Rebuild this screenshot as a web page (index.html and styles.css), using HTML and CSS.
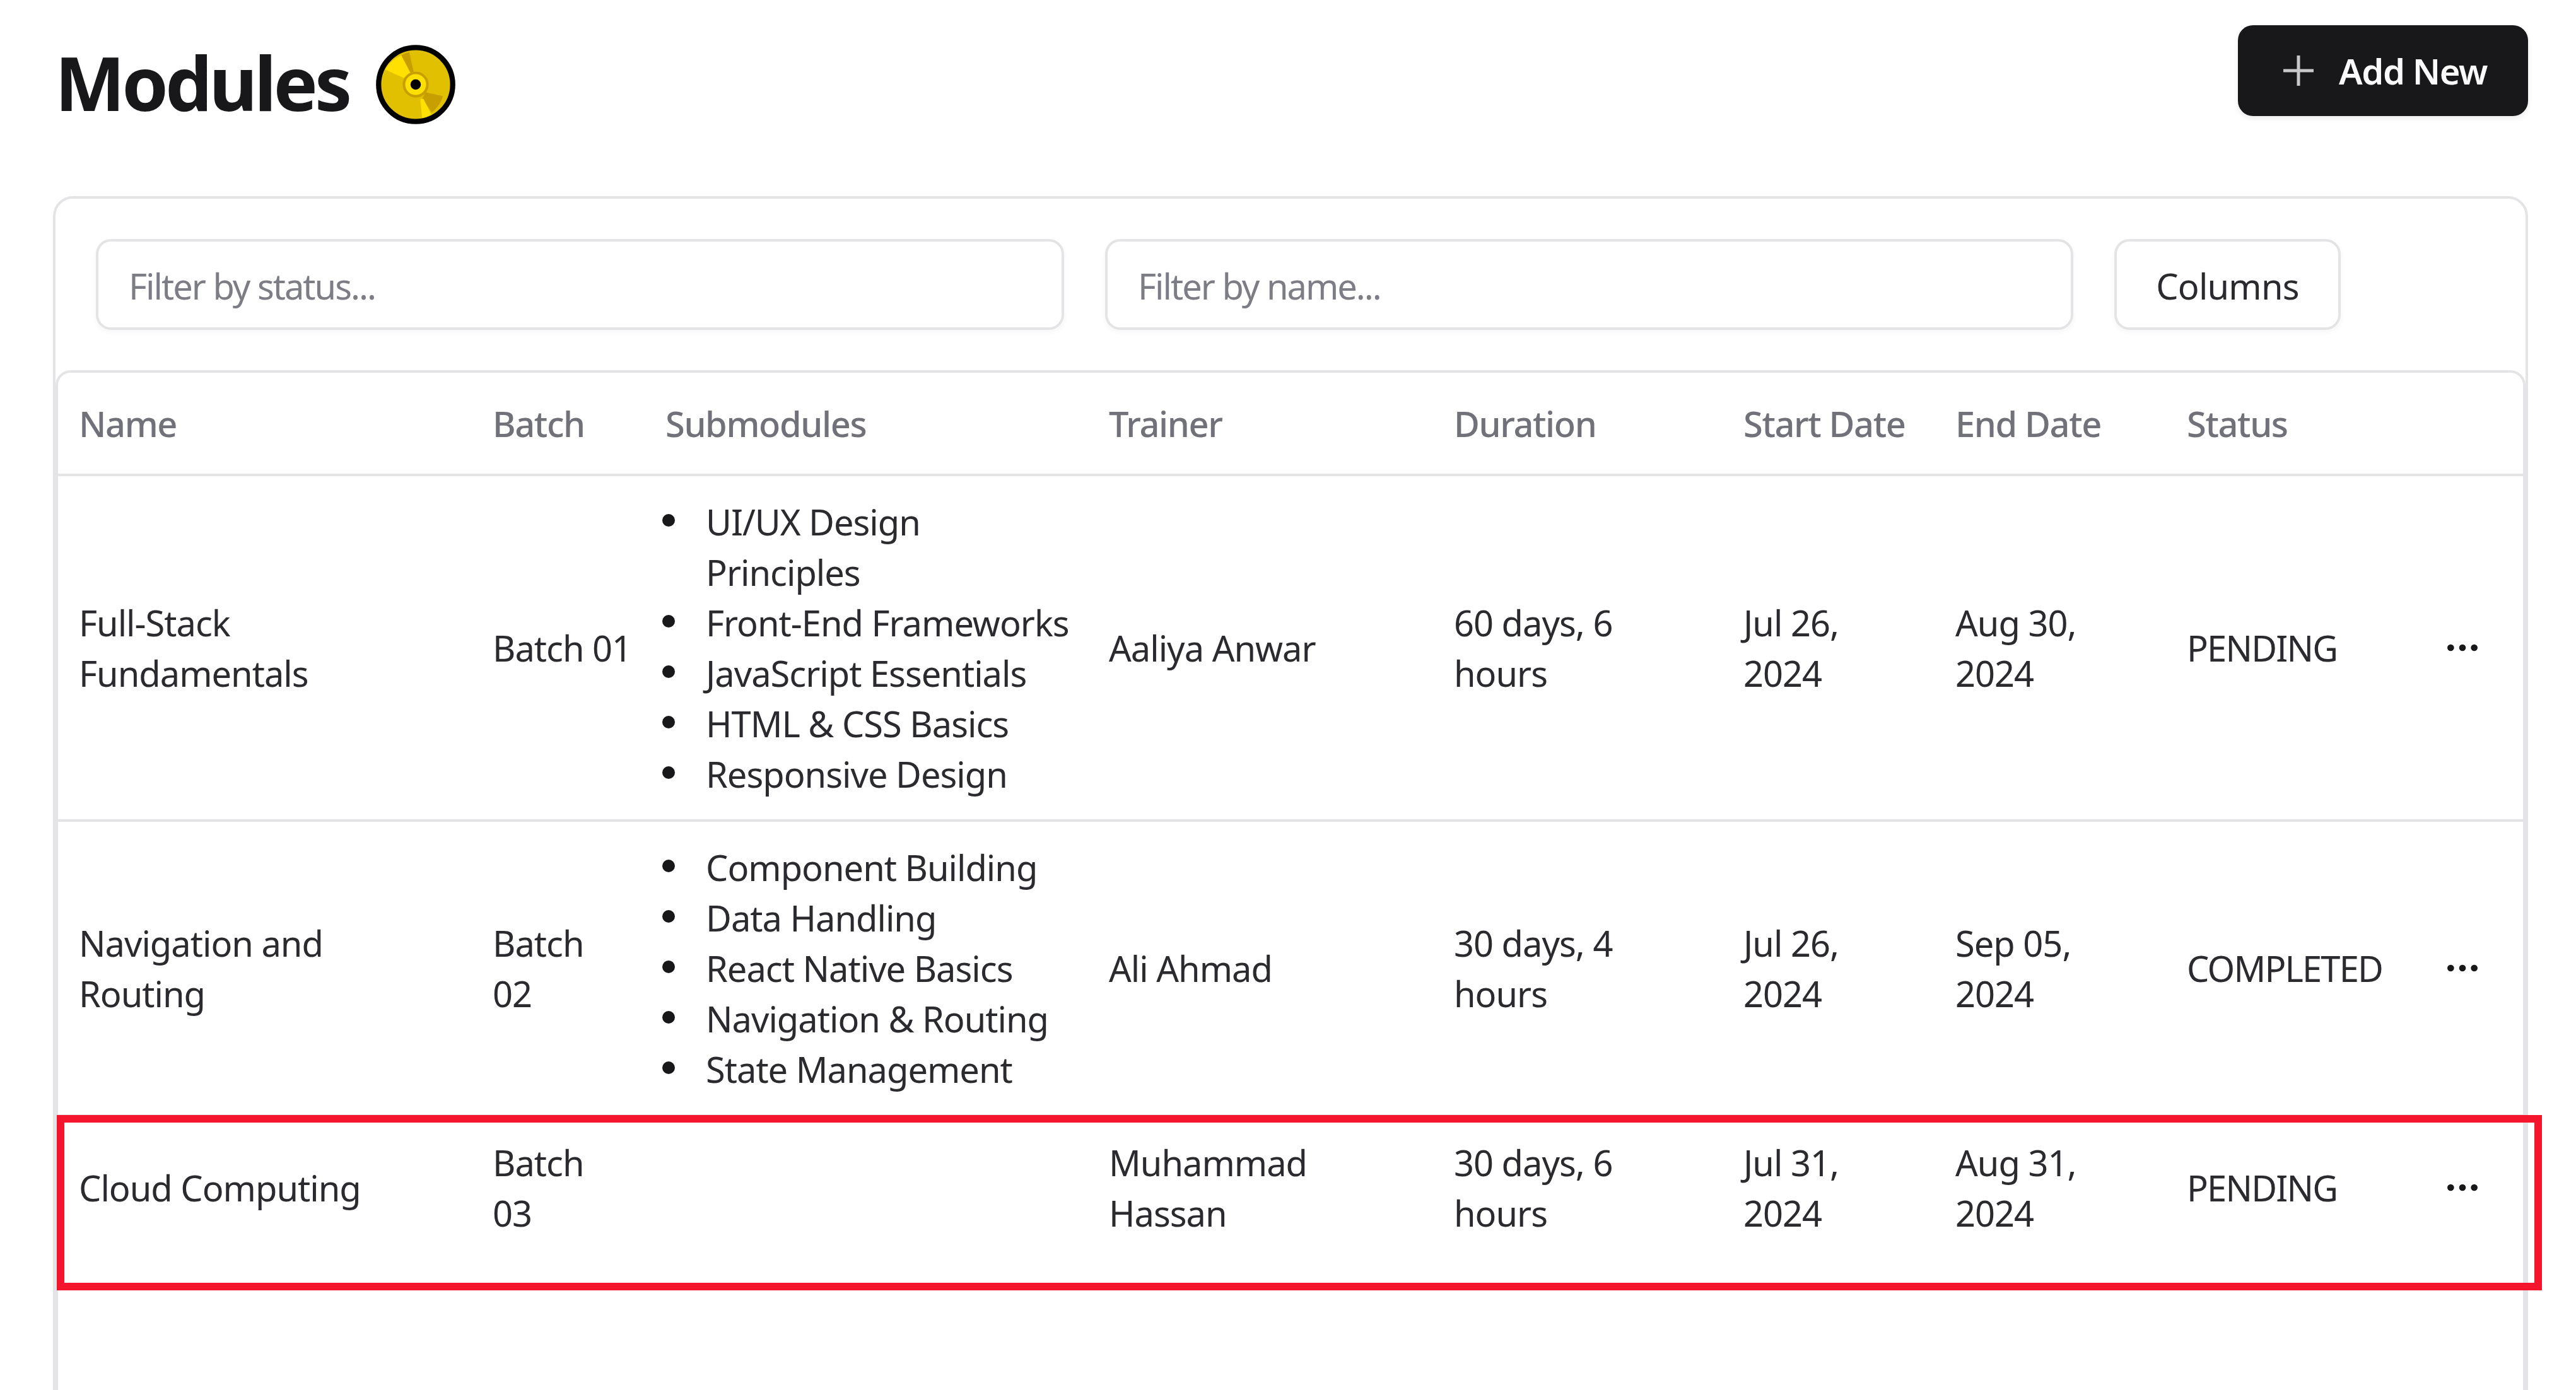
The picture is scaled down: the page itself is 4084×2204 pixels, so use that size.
FILE: index.html
```html
<!DOCTYPE html>
<html lang="en">
<head>
    <meta charset="UTF-8">
    <title>Modules</title>
    <link rel="stylesheet" href="styles.css">
</head>
<body>
    <div class="page">
        <header class="page-head">
            <h1 class="title">Modules
                <svg class="disc" viewBox="-66 -66 132 132">
                    <circle r="56" fill="#e0c000"/>
                    <path d="M-47 -23 A52 52 0 0 1 -22 -45 L-8 -18 L-18 -10 Z" fill="#ffe000"/>
                    <path d="M-22 -45 A52 52 0 0 1 -10 -50 L-3 -20 L-8 -18 Z" fill="#c89f00"/>
                    <path d="M15 12 L42 18 A52 52 0 0 1 25 43 L10 22 Z" fill="#c89f00"/>
                    <path d="M7 22 L12 22 L24 46 A52 52 0 0 1 10 52 Z" fill="#ffe000"/>
                    <circle r="20" fill="#c89f00"/>
                    <circle r="16" fill="#ffe000"/>
                    <circle r="8" fill="#000"/>
                    <circle r="57" fill="none" stroke="#000" stroke-width="8"/>
                </svg>
            </h1>
            <button class="btn-add">
                <svg class="plus" viewBox="0 0 48 48"><path d="M24 0V48M0 24H48"/></svg>
                Add New
            </button>
        </header>

        <section class="card">
            <div class="toolbar">
                <input class="filter" placeholder="Filter by status...">
                <input class="filter" placeholder="Filter by name...">
                <button class="btn-columns">Columns</button>
            </div>

            <div class="table-wrap">
                <table class="modules">
                    <colgroup>
                        <col class="c-name"><col class="c-batch"><col class="c-sub"><col class="c-trainer">
                        <col class="c-duration"><col class="c-start"><col class="c-end"><col class="c-status"><col>
                    </colgroup>
                    <thead>
                        <tr>
                            <th>Name</th><th>Batch</th><th>Submodules</th><th>Trainer</th>
                            <th>Duration</th><th>Start Date</th><th>End Date</th><th>Status</th><th></th>
                        </tr>
                    </thead>
                    <tbody>
                        <tr>
                            <td>Full-Stack Fundamentals</td>
                            <td class="nowrap">Batch 01</td>
                            <td class="sub-cell">
                                <ul class="subs">
                                    <li>UI/UX Design Principles</li>
                                    <li>Front-End Frameworks</li>
                                    <li>JavaScript Essentials</li>
                                    <li>HTML &amp; CSS Basics</li>
                                    <li>Responsive Design</li>
                                </ul>
                            </td>
                            <td>Aaliya Anwar</td>
                            <td>60 days, 6 hours</td>
                            <td>Jul 26, 2024</td>
                            <td>Aug 30, 2024</td>
                            <td class="status">PENDING</td>
                            <td class="actions"><svg class="dots" viewBox="0 0 24 24"><circle cx="5" cy="12" r="2"/><circle cx="12" cy="12" r="2"/><circle cx="19" cy="12" r="2"/></svg></td>
                        </tr>
                        <tr>
                            <td>Navigation and Routing</td>
                            <td>Batch 02</td>
                            <td class="sub-cell">
                                <ul class="subs">
                                    <li>Component Building</li>
                                    <li>Data Handling</li>
                                    <li>React Native Basics</li>
                                    <li>Navigation &amp; Routing</li>
                                    <li>State Management</li>
                                </ul>
                            </td>
                            <td>Ali Ahmad</td>
                            <td>30 days, 4 hours</td>
                            <td>Jul 26, 2024</td>
                            <td>Sep 05, 2024</td>
                            <td class="status">COMPLETED</td>
                            <td class="actions"><svg class="dots" viewBox="0 0 24 24"><circle cx="5" cy="12" r="2"/><circle cx="12" cy="12" r="2"/><circle cx="19" cy="12" r="2"/></svg></td>
                        </tr>
                        <tr>
                            <td>Cloud Computing</td>
                            <td>Batch 03</td>
                            <td></td>
                            <td>Muhammad Hassan</td>
                            <td>30 days, 6 hours</td>
                            <td>Jul 31, 2024</td>
                            <td>Aug 31, 2024</td>
                            <td class="status">PENDING</td>
                            <td class="actions"><svg class="dots" viewBox="0 0 24 24"><circle cx="5" cy="12" r="2"/><circle cx="12" cy="12" r="2"/><circle cx="19" cy="12" r="2"/></svg></td>
                        </tr>
                    </tbody>
                </table>
            </div>
        </section>
    </div>

    <div class="highlight"></div>
</body>
</html>
```

FILE: styles.css
```css
html, body {
    margin: 0;
    height: 100%;
    overflow: hidden;
    background: #fff;
}

body {
    font-family: "Noto Sans", sans-serif;
    font-size: 56px;
    line-height: 80px;
    color: #2b2b2f;
    letter-spacing: -1px;
}

.page {
    box-sizing: border-box;
    height: 100vh;
    overflow: hidden;
    padding: 40px 76px 0 84px;
}

.page-head {
    display: flex;
    justify-content: space-between;
    align-items: flex-start;
    margin-bottom: 100px;
}

.title {
    display: flex;
    align-items: center;
    gap: 38px;
    margin: 11px 0 0 3px;
    font-size: 118px;
    line-height: 160px;
    font-weight: 700;
    letter-spacing: -5px;
    color: #18181b;
}

.disc {
    width: 136px;
    height: 136px;
    margin-top: 6px;
}

.btn-add {
    display: flex;
    align-items: center;
    gap: 40px;
    box-sizing: border-box;
    width: 460px;
    height: 144px;
    padding: 0 0 0 72px;
    border: none;
    border-radius: 24px;
    background: #18181b;
    color: #fafafa;
    font: inherit;
    font-weight: 600;
    letter-spacing: -1.4px;
    box-shadow: 0 4px 8px rgba(0, 0, 0, 0.08);
}

.plus {
    width: 48px;
    height: 48px;
    stroke: #c8c8c8;
    stroke-width: 5;
    fill: none;
}

.card {
    height: 2100px;
    border: 4px solid #e4e4e7;
    border-radius: 32px;
}

.toolbar {
    display: flex;
    gap: 65px;
    padding: 64px 64px;
}

.filter {
    box-sizing: border-box;
    width: 1535px;
    height: 144px;
    padding: 4px 48px 0;
    border: 4px solid #e4e4e7;
    border-radius: 24px;
    font: inherit;
    letter-spacing: -2px;
    color: #18181b;
    box-shadow: 0 4px 8px rgba(0, 0, 0, 0.04);
    outline: none;
}

.filter::placeholder {
    color: #7d7d86;
}

.btn-columns {
    box-sizing: border-box;
    width: 359px;
    height: 144px;
    padding: 4px 0 0;
    border: 4px solid #e4e4e7;
    border-radius: 24px;
    background: #fff;
    color: #2b2b2f;
    font: inherit;
    letter-spacing: -0.8px;
    box-shadow: 0 4px 8px rgba(0, 0, 0, 0.04);
}

.table-wrap {
    height: 1900px;
    border: 4px solid #e4e4e7;
    border-radius: 24px;
}

.modules {
    width: 100%;
    table-layout: fixed;
    border-collapse: collapse;
}

.c-name { width: 656px; }
.c-batch { width: 274px; }
.c-sub { width: 703px; }
.c-trainer { width: 547px; }
.c-duration { width: 459px; }
.c-start { width: 336px; }
.c-end { width: 367px; }
.c-status { width: 374px; }

.modules th {
    height: 160px;
    padding: 0 33px;
    text-align: left;
    font-weight: 500;
    color: #71717a;
    letter-spacing: -1.4px;
}

.modules thead tr,
.modules tbody tr {
    border-bottom: 4px solid #e4e4e7;
}

.modules tbody tr:last-child {
    border-bottom: none;
}

.modules td {
    padding: 32px 33px;
    vertical-align: middle;
}

.modules td.nowrap {
    white-space: nowrap;
    padding-right: 0;
}

.modules td.sub-cell {
    padding-right: 10px;
}

.modules td.status {
    letter-spacing: -1.8px;
}

.subs {
    margin: 0;
    padding: 0;
    list-style: none;
}

.subs li {
    display: grid;
    grid-template-columns: 64px 1fr;
}

.subs li::before {
    content: "";
    width: 20px;
    height: 20px;
    margin: 28px 0 0 -5px;
    border-radius: 50%;
    background: #18181b;
}

.actions {
    text-align: center;
}

.dots {
    display: block;
    width: 64px;
    height: 64px;
    margin: 0 auto;
    fill: #18181b;
}

/* red frame laid over the third row */
.highlight {
    position: absolute;
    left: 90px;
    top: 1768px;
    box-sizing: border-box;
    width: 3940px;
    height: 278px;
    border: 12px solid #f5152d;
}
```
